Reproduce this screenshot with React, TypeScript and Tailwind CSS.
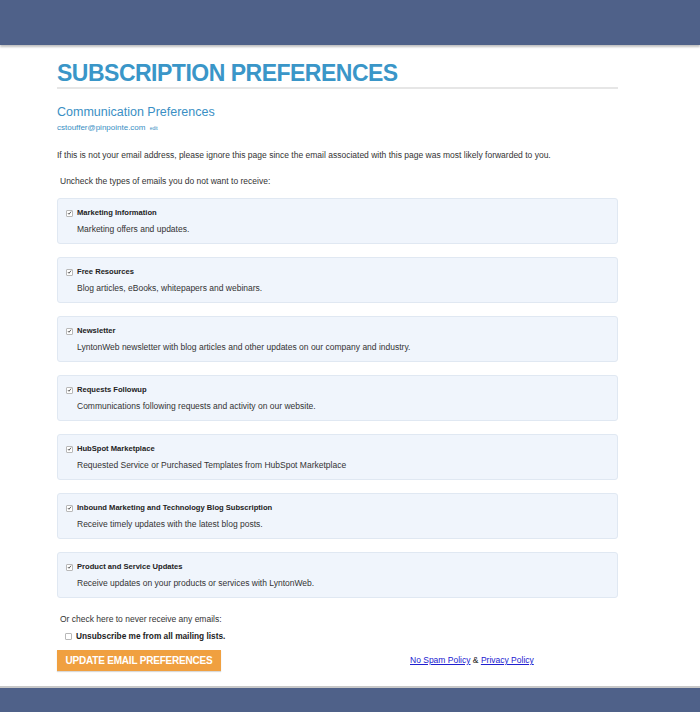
const OPTIONS = [
  { title: 'Marketing Information', desc: 'Marketing offers and updates.' },
  { title: 'Free Resources', desc: 'Blog articles, eBooks, whitepapers and webinars.' },
  {
    title: 'Newsletter',
    desc: 'LyntonWeb newsletter with blog articles and other updates on our company and industry.',
  },
  { title: 'Requests Followup', desc: 'Communications following requests and activity on our website.' },
  { title: 'HubSpot Marketplace', desc: 'Requested Service or Purchased Templates from HubSpot Marketplace' },
  { title: 'Inbound Marketing and Technology Blog Subscription', desc: 'Receive timely updates with the latest blog posts.' },
  { title: 'Product and Service Updates', desc: 'Receive updates on your products or services with LyntonWeb.' },
];

function Check({ checked }: { checked: boolean }) {
  return (
    <span className="inline-flex h-[7px] w-[7px] items-center justify-center rounded-[1px] border border-[#b8b8b8] bg-white">
      {checked && (
        <svg viewBox="0 0 8 8" className="h-[6px] w-[6px]">
          <path d="M1.5 4.2 L3.2 6 L6.5 1.8" fill="none" stroke="#333" strokeWidth="1.3" />
        </svg>
      )}
    </span>
  );
}

export default function App() {
  return (
    <div className="flex min-h-[712px] flex-col bg-white font-['Liberation_Sans',Arial,sans-serif] text-[#333]">
      <header className="h-[45px] bg-[#4f6189] shadow-[0_2px_2px_rgba(0,0,0,0.25)]" />

      <main className="flex-1 pl-[57px] pr-[82px] pt-[15px]">
        <h1 className="border-b-2 border-[#e6e6e6] pb-[1px] text-[23px] font-bold leading-[26px] tracking-[-0.5px] text-[#3a96c8]">
          SUBSCRIPTION PREFERENCES
        </h1>

        <h2 className="mt-[15px] text-[12.5px] leading-[16px] text-[#3a8fc4]">Communication Preferences</h2>
        <p className="mt-[2px] text-[8px] leading-[12px] text-[#3a8fc4]">
          cstouffer@pinpointe.com <span className="ml-[2px] text-[5px]">edit</span>
        </p>

        <p className="mt-[15px] text-[8.5px] leading-[12px]">
          If this is not your email address, please ignore this page since the email associated with this page was most likely forwarded to you.
        </p>

        <p className="mt-[14px] pl-[3px] text-[8.5px] leading-[12px]">
          Uncheck the types of emails you do not want to receive:
        </p>

        <div className="mt-[11px] flex flex-col gap-[13px]">
          {OPTIONS.map((o) => (
            <div
              key={o.title}
              className="h-[46px] rounded-[3px] border border-[#e0e8f2] bg-[#f0f5fc] pl-[8px] pt-[9px]"
            >
              <div className="flex items-center gap-[4px] text-[7.6px] font-bold leading-[10px] text-[#222]">
                <Check checked />
                {o.title}
              </div>
              <p className="mt-[5px] pl-[11px] text-[8.5px] leading-[12px]">{o.desc}</p>
            </div>
          ))}
        </div>

        <p className="mt-[15px] pl-[3px] text-[8.5px] leading-[12px]">Or check here to never receive any emails:</p>
        <div className="mt-[5px] flex items-center gap-[4px] pl-[8px] text-[8.3px] font-bold leading-[12px] text-[#222]">
          <Check checked={false} />
          Unsubscribe me from all mailing lists.
        </div>

        <div className="mt-[8px] flex items-center">
          <button className="h-[21px] w-[164px] bg-[#f0a040] text-[10px] font-bold tracking-[-0.2px] text-white shadow-[0_1px_1px_rgba(0,0,0,0.15)]">
            UPDATE EMAIL PREFERENCES
          </button>
          <div className="ml-[189px] text-[8.5px] text-[#222]">
            <a href="#" className="text-[#2020d0] underline">No Spam Policy</a> &amp;{' '}
            <a href="#" className="text-[#2020d0] underline">Privacy Policy</a>
          </div>
        </div>
      </main>

      <footer className="h-[26px] border-t-2 border-[#c8c8c8] bg-[#4f6189]" />
    </div>
  );
}
